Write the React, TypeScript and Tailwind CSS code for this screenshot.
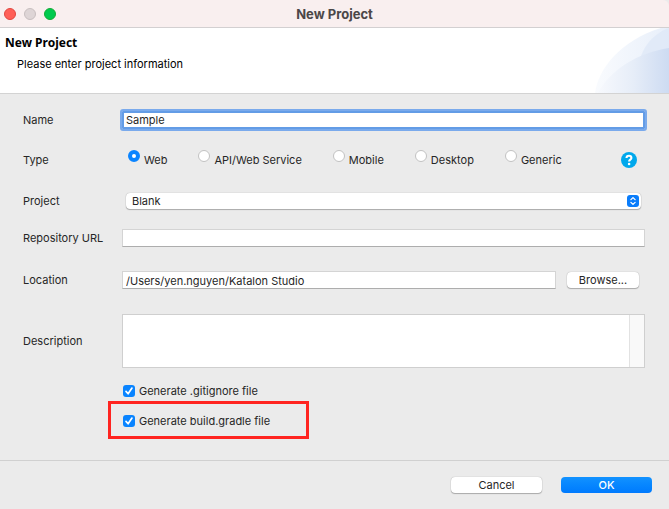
import { useState, type ReactNode } from 'react';

const PROJECT_TYPES = ['Web', 'API/Web Service', 'Mobile', 'Desktop', 'Generic'];

const FIELD =
  'block h-[18px] w-full min-w-0 border border-[#d4d4d4] border-b-[#adadad] bg-white px-[3px] pt-0.5 text-[#262626] outline-none';
const PUSH_BUTTON =
  'flex h-4 items-center justify-center rounded-[4px] bg-white text-[#262626] shadow-[0_0_1px_rgba(0,0,0,0.35),0_1px_1px_rgba(0,0,0,0.25)]';

function Row({ label, htmlFor, className, children }: { label: string; htmlFor?: string; className: string; children: ReactNode }) {
  return (
    <div className={`flex items-center ${className}`}>
      <label htmlFor={htmlFor} className="w-[99px] shrink-0 leading-4">
        {label}
      </label>
      <div className="flex min-w-0 flex-1 items-center">{children}</div>
    </div>
  );
}

function CheckOption({ label }: { label: string }) {
  const [checked, setChecked] = useState(true);
  return (
    <label className="flex items-center gap-1">
      <span className="grid size-3 shrink-0">
        <input
          type="checkbox"
          checked={checked}
          onChange={(e) => setChecked(e.target.checked)}
          className="peer col-start-1 row-start-1 size-3 appearance-none rounded-[3px] border border-[#c4c4c4] bg-white checked:border-0 checked:bg-[#0a84ff]"
        />
        <svg viewBox="0 0 12 12" className="pointer-events-none col-start-1 row-start-1 hidden size-3 peer-checked:block" fill="none" stroke="#fff" strokeWidth="1.7" strokeLinecap="round" strokeLinejoin="round">
          <path d="M3 6.4 5.1 8.8 9 3.1" />
        </svg>
      </span>
      <span className="leading-4">{label}</span>
    </label>
  );
}

export default function App() {
  const [type, setType] = useState('Web');

  return (
    <div className="flex min-h-screen flex-col bg-[#ebebeb] font-['Inter','Liberation_Sans',sans-serif] text-[11px] text-[#262626]">
      <div className="flex h-7 shrink-0 items-center rounded-tr-md border-b border-[#d3d0d1] bg-[#f9efef] px-1">
        <div className="flex flex-1 gap-2">
          <button aria-label="Close" className="size-3 rounded-full border border-[#e2463f] bg-[#ff5f57]" />
          <button aria-label="Minimize" className="size-3 rounded-full border border-[#c8bfc0] bg-[#ded5d6]" />
          <button aria-label="Zoom" className="size-3 rounded-full border border-[#12ac35] bg-[#00ca4e]" />
        </div>
        <h1 className="text-[13px] leading-4 font-bold text-[#4b4748]">New Project</h1>
        <div className="flex-1" />
      </div>

      <header className="flex shrink-0 justify-between border-b border-[#d3d3d3] bg-white">
        <div className="pt-[7px] pl-[5px] text-black">
          <h2 className="font-['Noto_Sans','Open_Sans',sans-serif] text-[12px] leading-4 font-bold">New Project</h2>
          <p className="mt-[5px] pl-3 leading-4">Please enter project information</p>
        </div>
        <svg viewBox="0 0 74 65" className="h-[65px] w-[74px]" aria-hidden="true">
          <defs>
            <linearGradient id="outer" x1="0" x2="1">
              <stop offset="0" stopColor="#f9fbfe" />
              <stop offset="1" stopColor="#e8effa" />
            </linearGradient>
            <linearGradient id="inner" x1="0" x2="1">
              <stop offset="0" stopColor="#f7f9fd" />
              <stop offset="0.5" stopColor="#e6edf8" />
              <stop offset="1" stopColor="#cddbf2" />
            </linearGradient>
          </defs>
          <path d="M0 65C3 42 24 13 66 0h8v65Z" fill="url(#outer)" />
          <path d="M46 28C51 15 60 5 74 0v28Z" fill="#dde7f6" opacity="0.7" />
          <path d="M3 65C15 42 42 25 74 20v45Z" fill="url(#inner)" />
        </svg>
      </header>

      <form id="project" className="flex-1 pt-[6px] pr-6 pb-5 pl-[23px]" onSubmit={(e) => e.preventDefault()}>
        <Row label="Name" htmlFor="name" className="h-10">
          <input
            id="name"
            defaultValue="Sample"
            className="block h-[18px] w-full min-w-0 rounded-[1px] border-2 border-[#639ce6] bg-white px-[2px] text-[#262626] outline-2 outline-[#7aaaec]"
          />
        </Row>

        <Row label="Type" className="h-10">
          <div role="radiogroup" aria-label="Type" className="flex flex-1 gap-x-[31px] pl-[6px]">
            {PROJECT_TYPES.map((name) => (
              <label key={name} className="flex items-start gap-1 pb-0.5 whitespace-nowrap">
                <input
                  type="radio"
                  name="type"
                  checked={type === name}
                  onChange={() => setType(name)}
                  className="size-3 shrink-0 appearance-none rounded-full border border-[#c2c2c2] bg-white checked:border-4 checked:border-[#0a84ff]"
                />
                <span className="pt-0.5 leading-4">{name}</span>
              </label>
            ))}
          </div>
          <button type="button" aria-label="Help" className="mr-2 size-4 shrink-0">
            <svg viewBox="0 0 16 16" className="size-4" fill="none">
              <circle cx="8" cy="8" r="8" fill="#00a8ec" />
              <path d="M5.5 6.1C5.5 4.5 6.6 3.7 8 3.7s2.4.8 2.4 2.2c0 1.7-2.3 1.8-2.3 3.6" stroke="#fff" strokeWidth="2.1" />
              <circle cx="8.1" cy="12" r="1.3" fill="#fff" />
            </svg>
          </button>
        </Row>

        <Row label="Project" htmlFor="template" className="h-[42px]">
          <div className="mr-1 ml-1 grid flex-1 items-center">
            <select
              id="template"
              className="col-start-1 row-start-1 h-4 w-full appearance-none rounded-[4px] bg-white pl-[6px] leading-4 shadow-[0_0_1px_rgba(0,0,0,0.35),0_1px_1px_rgba(0,0,0,0.25)]"
            >
              <option>Blank</option>
            </select>
            <svg viewBox="0 0 12 12" className="pointer-events-none col-start-1 row-start-1 mr-0.5 size-3 justify-self-end" fill="none" strokeLinecap="round" strokeLinejoin="round">
              <rect width="12" height="12" rx="3" fill="#0a7dfb" />
              <path d="M3.9 4.6 6 2.6l2.1 2M3.9 7.4l2.1 2 2.1-2" stroke="#fff" strokeWidth="1.3" />
            </svg>
          </div>
        </Row>

        <Row label="Repository URL" htmlFor="repository" className="h-8">
          <input id="repository" className={FIELD} />
        </Row>

        <Row label="Location" htmlFor="location" className="h-[52px]">
          <input id="location" defaultValue="/Users/yen.nguyen/Katalon Studio" className={FIELD} />
          <button type="button" className={`${PUSH_BUTTON} mr-[6px] ml-[11px] w-[72px] shrink-0`}>
            Browse...
          </button>
        </Row>

        <Row label="Description" htmlFor="description" className="h-[70px]">
          <div className="flex h-[54px] flex-1 border border-[#cfcfcf] bg-white">
            <textarea id="description" className="block h-full min-w-0 flex-1 resize-none px-[3px] outline-none" />
            <div className="w-[15px] border-l border-[#e2e2e2] bg-[#f9f9f9]" />
          </div>
        </Row>

        <div className="flex flex-col items-start pt-[7px] pl-[85px]">
          <div className="pl-[15px]">
            <CheckOption label="Generate .gitignore file" />
          </div>
          <div className="mt-0.5 flex h-[38px] w-[201px] items-center border-3 border-[#ff2420] pt-0.5 pl-3">
            <CheckOption label="Generate build.gradle file" />
          </div>
        </div>
      </form>

      <footer className="flex shrink-0 justify-end gap-[19px] border-t border-[#d0d0d0] pt-4 pr-[17px] pb-4">
        <button type="button" className={`${PUSH_BUTTON} w-[91px]`}>
          Cancel
        </button>
        <button
          type="submit"
          form="project"
          className="flex h-4 w-[91px] items-center justify-center rounded-[4px] bg-linear-to-b from-[#1292ff] to-[#007afe] font-medium text-white"
        >
          OK
        </button>
      </footer>
    </div>
  );
}
